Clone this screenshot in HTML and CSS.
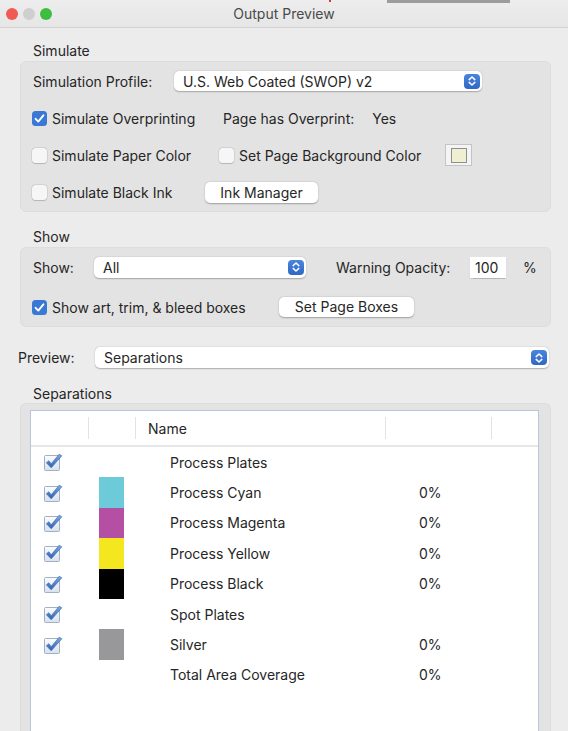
FILE: index.html
```html
<!DOCTYPE html>
<html>
<head>
<meta charset="utf-8">
<link rel="stylesheet" href="styles.css">
</head>
<body>
<div class="window">
  <div class="behind behind-red"></div>
  <div class="behind behind-grey"></div>
  <div class="titlebar">
    <div class="lights">
      <span class="light red"></span>
      <span class="light grey"></span>
      <span class="light green"></span>
    </div>
    <div class="title">Output Preview</div>
    <div></div>
  </div>

  <div class="content">
    <div class="section-label sim-label">Simulate</div>
    <div class="group sim-group">
      <div class="row">
        <span class="label profile-label">Simulation Profile:</span>
        <div class="select profile-select">
          <span class="select-text">U.S. Web Coated (SWOP) v2</span>
          <span class="stepper"><svg viewBox="0 0 16 14" width="16" height="14"><path d="M5.2 5.6 L8 3 L10.8 5.6 M5.2 8.4 L8 11 L10.8 8.4" fill="none" stroke="#fff" stroke-width="1.5" stroke-linecap="round" stroke-linejoin="round"/></svg></span>
        </div>
      </div>
      <div class="row">
        <label class="check-item w191"><span class="cb checked"><svg viewBox="0 0 15 15" width="15" height="15"><path d="M3.6 7.8 L6.3 10.6 L11.4 4.3" fill="none" stroke="#fff" stroke-width="1.9" stroke-linecap="round" stroke-linejoin="round"/></svg></span>Simulate Overprinting</label>
        <span class="label">Page has Overprint:</span>
        <span class="label yes">Yes</span>
      </div>
      <div class="row">
        <label class="check-item w187"><span class="cb"></span>Simulate Paper Color</label>
        <label class="check-item w226"><span class="cb"></span>Set Page Background Color</label>
        <span class="swatch-well"><span class="swatch-inner"></span></span>
      </div>
      <div class="row">
        <label class="check-item w173"><span class="cb"></span>Simulate Black Ink</label>
        <span class="button ink-btn">Ink Manager</span>
      </div>
    </div>

    <div class="section-label show-label">Show</div>
    <div class="group show-group">
      <div class="row">
        <span class="label show-text">Show:</span>
        <div class="select show-select">
          <span class="select-text">All</span>
          <span class="stepper"><svg viewBox="0 0 16 14" width="16" height="14"><path d="M5.2 5.6 L8 3 L10.8 5.6 M5.2 8.4 L8 11 L10.8 8.4" fill="none" stroke="#fff" stroke-width="1.5" stroke-linecap="round" stroke-linejoin="round"/></svg></span>
        </div>
        <span class="label warn">Warning Opacity:</span>
        <span class="field">100</span>
        <span class="label pct">%</span>
      </div>
      <div class="row">
        <label class="check-item w248"><span class="cb checked"><svg viewBox="0 0 15 15" width="15" height="15"><path d="M3.6 7.8 L6.3 10.6 L11.4 4.3" fill="none" stroke="#fff" stroke-width="1.9" stroke-linecap="round" stroke-linejoin="round"/></svg></span>Show art, trim, &amp; bleed boxes</label>
        <span class="button boxes-btn">Set Page Boxes</span>
      </div>
    </div>

    <div class="row preview-row">
      <span class="label preview-text">Preview:</span>
      <div class="select preview-select">
        <span class="select-text">Separations</span>
        <span class="stepper"><svg viewBox="0 0 16 14" width="16" height="14"><path d="M5.2 5.6 L8 3 L10.8 5.6 M5.2 8.4 L8 11 L10.8 8.4" fill="none" stroke="#fff" stroke-width="1.5" stroke-linecap="round" stroke-linejoin="round"/></svg></span>
      </div>
    </div>

    <div class="section-label sep-label">Separations</div>
    <div class="group sep-group">
      <div class="table">
        <div class="thead">
          <div class="th"></div>
          <div class="th sep"></div>
          <div class="th sep name-head">Name</div>
          <div class="th sep"></div>
          <div class="th sep"></div>
        </div>
        <div class="tbody" id="tbody"></div>
      </div>
    </div>
  </div>
</div>
<script>
  var rows = [
    ["Process Plates", null, ""],
    ["Process Cyan", "#6ccad9", "0%"],
    ["Process Magenta", "#b54fa4", "0%"],
    ["Process Yellow", "#f4e61f", "0%"],
    ["Process Black", "#000000", "0%"],
    ["Spot Plates", null, ""],
    ["Silver", "#98989a", "0%"],
    ["Total Area Coverage", null, "0%", true]
  ];
  var tb = document.getElementById("tbody");
  var checkSvg = '<svg viewBox="0 0 20 20" width="20" height="20"><defs><linearGradient id="bx" x1="0" y1="0" x2="0" y2="1"><stop offset="0" stop-color="#fbfcfe"/><stop offset="1" stop-color="#d9e1ec"/></linearGradient><linearGradient id="ck" x1="0" y1="0" x2="0" y2="1"><stop offset="0" stop-color="#86acdf"/><stop offset="1" stop-color="#2a5eb0"/></linearGradient></defs><rect x="1.5" y="3.5" width="15" height="15" rx="1" fill="url(#bx)" stroke="#9fb0c7" stroke-width="1"/><path d="M3.4 10.8 L8.2 15.8 L18.8 3.8 L16.2 2.2 L8.2 11.8 L5.8 8.8 Z" fill="url(#ck)" stroke="#3a6cb8" stroke-width="0.7" stroke-linejoin="round"/></svg>';
  rows.forEach(function (r) {
    var d = document.createElement("div");
    d.className = "tr";
    var c1 = '<div class="td cbcell">' + (r[3] ? '' : checkSvg) + '</div>';
    var c2 = '<div class="td swcell">' + (r[1] ? '<span class="sw" style="background:' + r[1] + '"></span>' : '') + '</div>';
    var c3 = '<div class="td namecell">' + r[0] + '</div>';
    var c4 = '<div class="td pctcell">' + r[2] + '</div>';
    var c5 = '<div class="td"></div>';
    d.innerHTML = c1 + c2 + c3 + c4 + c5;
    tb.appendChild(d);
  });
</script>
</body>
</html>
```

FILE: styles.css
```css
* { box-sizing: border-box; }
html, body { margin: 0; padding: 0; }
body {
  width: 568px;
  height: 731px;
  overflow: hidden;
  background: #ececec;
  font-family: Inter, "Noto Sans", sans-serif;
  font-size: 14px;
  color: #262626;
}
.window {
  position: relative;
  width: 568px;
  height: 731px;
  background: #ececec;
}
.behind { position: absolute; top: 0; height: 2px; }
.behind-red { left: 329px; width: 2px; background: #d23a3a; }
.behind-grey { left: 387px; width: 123px; background: #9c9c9c; height: 3px; }

.titlebar {
  height: 28px;
  display: grid;
  grid-template-columns: 1fr auto 1fr;
  align-items: center;
  background: linear-gradient(#ededed, #e6e6e6);
  border-bottom: 1px solid #d3d3d3;
  border-radius: 8px 8px 0 0;
}
.lights { display: flex; gap: 5px; padding-left: 6px; }
.light { width: 12px; height: 12px; border-radius: 50%; display: block; }
.light.red { background: #f05a52; }
.light.grey { background: #cfcfcf; }
.light.green { background: #3ebd3f; }
.title { color: #4a4a4a; font-size: 14px; }

.content { padding: 0 17px 0 18px; display: flex; flex-direction: column; }

.section-label { padding-left: 15px; height: 17px; line-height: 17px; }
.sim-label { margin-top: 14px; }
.show-label { margin-top: 16px; }
.sep-label { margin-top: 17px; }

.group {
  margin-left: 2px;
  background: #e3e3e3;
  border: 1px solid #dddddd;
  border-radius: 6px;
  display: flex;
  flex-direction: column;
}
.sim-group { margin-top: 2px; padding: 8px 11px 8px 11px; gap: 15px; }
.show-group { margin-top: 2px; padding: 8px 11px 8px 11px; gap: 18px; }

.row { display: flex; align-items: center; height: 22px; white-space: nowrap; }

.label { display: inline-block; }
.profile-label { width: 142px; padding-left: 1px; }
.yes { margin-left: 18px; }

.select {
  height: 20px;
  background: #fff;
  border-radius: 5px;
  box-shadow: 0 0.5px 1.5px rgba(0,0,0,0.28);
  display: flex;
  align-items: center;
  justify-content: space-between;
  padding: 0 2px 0 9px;
}
.profile-select { width: 308px; }
.stepper {
  width: 16px;
  height: 15px;
  border-radius: 4px;
  background: linear-gradient(#4a85dc, #2f68c4);
  display: flex;
  align-items: center;
  justify-content: center;
}
.stepper svg { display: block; }

.check-item { display: flex; align-items: center; gap: 5px; }
.w191 { width: 191px; }
.w187 { width: 187px; }
.w226 { width: 226px; }
.w173 { width: 173px; }
.w248 { width: 248px; }

.cb {
  width: 15px;
  height: 15px;
  border-radius: 3.5px;
  background: #f6f6f6;
  box-shadow: 0 0 0 0.5px rgba(0,0,0,0.12), 0 0.5px 1px rgba(0,0,0,0.15);
  display: inline-block;
  flex: none;
}
.cb.checked { background: #3a78d6; box-shadow: none; }
.cb svg { display: block; }

.swatch-well {
  width: 27px;
  height: 22px;
  background: #f4f4f4;
  border: 1px solid #c4c4c4;
  display: flex;
  align-items: center;
  justify-content: center;
}
.swatch-inner {
  width: 16px;
  height: 15px;
  background: #f0efd2;
  border: 1px solid #8f8f8f;
}

.button {
  height: 21px;
  line-height: 21px;
  background: #fff;
  border-radius: 5px;
  box-shadow: 0 0.5px 1.5px rgba(0,0,0,0.3);
  text-align: center;
}
.ink-btn { width: 113px; }
.boxes-btn { width: 135px; height: 20px; line-height: 20px; margin-left: -1px; }

.show-text { width: 62px; padding-left: 1px; }
.show-select { width: 212px; height: 21px; }
.warn { margin-left: 30px; width: 134px; }
.field {
  width: 36px;
  height: 21px;
  line-height: 22px;
  background: #fff;
  padding-left: 5px;
  box-shadow: 0 0.5px 1px rgba(0,0,0,0.2);
}
.pct { margin-left: 17px; }

.preview-row { margin-top: 20px; height: 21px; }
.preview-text { width: 77px; }
.preview-select { flex: 1; height: 21px; margin-right: 2px; }

.sep-group {
  margin-top: 1px;
  padding: 6px 11px 0 9px;
  border-radius: 6px 6px 0 0;
  border-bottom: none;
  flex: 1;
  height: 340px;
}
.table {
  background: #fff;
  border: 1px solid #b9c5dc;
  border-bottom: none;
  height: 340px;
}
.thead {
  display: grid;
  grid-template-columns: 57px 47px 250px 106px 1fr;
  height: 36px;
  border-bottom: 2px solid #e6e6e6;
  align-items: center;
}
.th { height: 22px; display: flex; align-items: center; }
.th.sep { border-left: 1px solid #e3e3e3; }
.name-head { padding-left: 12px; }

.tbody { padding-top: 0; }
.tr {
  display: grid;
  grid-template-columns: 57px 47px 250px 106px 1fr;
  height: 30.4px;
  align-items: stretch;
}
.td { display: flex; align-items: center; }
.cbcell { padding-left: 12px; }
.cbcell svg { display: block; }
.swcell { padding-left: 11px; }
.sw { display: block; width: 25px; height: 100%; }
.namecell { padding-left: 35px; }
.pctcell { padding-left: 34px; }
```
